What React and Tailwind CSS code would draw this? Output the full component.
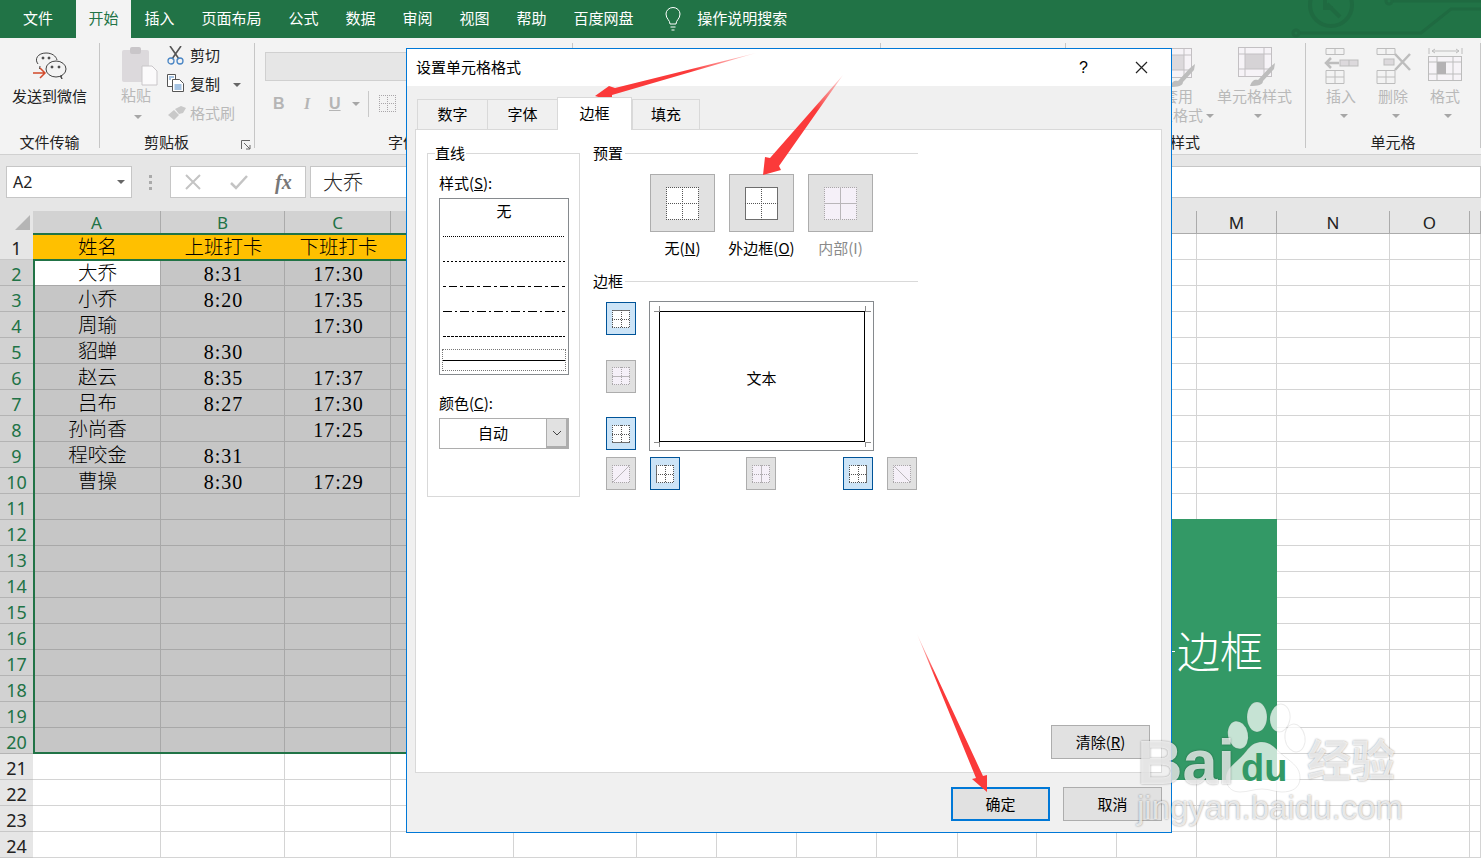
import React from "react";

const UI = "font-['Noto_Sans_CJK_SC',sans-serif]";
const Tab = ({ t, active }) => (
  <div className={`h-full flex items-center justify-center pb-[2px] text-[15px] whitespace-nowrap ${active ? "bg-[#f3f3f3] text-[#217346] w-[55px]" : "text-white px-[13.5px]"}`}>{t}</div>
);

const Caret = ({ c = "#a6a6a6", className = "" }) => (
  <svg width="8" height="4" viewBox="0 0 8 4" className={className}><path d="M0 0h8L4 4z" fill={c} /></svg>
);

function Group({ w, label, children, labelClass = "text-center" }) {
  return (
    <div style={{ width: w }} className="h-[105px] shrink-0 border-r border-[#c6c6c6] relative">
      <div className="h-[88px] relative">{children}</div>
      <div className={`h-[22px] text-[15px] leading-[22px] text-[#222] whitespace-nowrap ${labelClass}`}>{label}</div>
    </div>
  );
}

const WeChat = () => (
  <svg width="34" height="28" viewBox="0 0 34 28" fill="none" stroke="#444" strokeWidth="1">
    <path d="M5 12 C1 7 5 1 13 1 C19 1 23 4 24 8" />
    <path d="M7 14 L6.500 17" />
    <ellipse cx="23" cy="17" rx="10" ry="8" fill="#f3f3f3" />
    <path d="M27 24l2 3-1-4" />
    <circle cx="10" cy="6" r="1" fill="#444" /><circle cx="16" cy="6" r="1" fill="#444" />
    <circle cx="19" cy="15" r="1" fill="#444" /><circle cx="26" cy="15" r="1" fill="#444" />
    <path d="M0 21h11M7 16l5 5-5 5" stroke="#d2492a" strokeWidth="1.500" />
  </svg>
);
const Clip = () => (
  <svg width="36" height="40" viewBox="0 0 36 40">
    <rect x="0" y="3" width="27" height="32" rx="2" fill="#dcd9dc" />
    <rect x="8" y="0" width="11" height="7" rx="2" fill="#c9c6c9" />
    <path d="M20 19h10l5 5v14H20z" fill="#fbfafb" stroke="#c9c6c9" />
  </svg>
);
const Scissors = () => (
  <svg width="17" height="19" viewBox="0 0 17 19" fill="none">
    <path d="M3 0l9 13M14 0L5 13" stroke="#555" strokeWidth="1.600" />
    <circle cx="4" cy="15" r="3" stroke="#4a86c5" strokeWidth="1.300" /><circle cx="13" cy="15" r="3" stroke="#4a86c5" strokeWidth="1.300" />
  </svg>
);
const Copy = () => (
  <svg width="17" height="18" viewBox="0 0 17 18" fill="#fff" stroke="#555">
    <path d="M.5.500h8v12h-8z" /><path d="M5.500 5.500h7l4 4v8h-11z" />
    <path d="M7.500 11h7M7.500 13h7M7.500 15h7M2 3h5M2 5h2" stroke="#4a86c5" />
  </svg>
);
const Brush = () => (
  <svg width="18" height="14" viewBox="0 0 18 14"><path d="M0 9l6-5 5 5-5 5zM7 3l6-3 5 2-3 5-4 1z" fill="#c9c9c9" /></svg>
);

const TableStyleIcon = ({ w = 40, fillC = "#dcd9dc" }) => (
  <svg width={w} height="40" viewBox="0 0 40 40" fill="none">
    <rect x=".5" y=".5" width="33" height="29" fill="#f6f3f7" stroke="#c3c0c3" />
    <rect x="7" y="7" width="19" height="15" fill={fillC} />
    <path d="M7 .5v29M26 .5v29M.5 7h33M.5 22h33" stroke="#c3c0c3" />
    <path d="M12 39c2-6 5-7 8-6l12-13 5-4-1 6-11 12c0 4-5 5-13 5z" fill="#bdbdbd" />
  </svg>
);
const InsertIcon = () => (
  <svg width="36" height="36" viewBox="0 0 36 36" fill="none" stroke="#bdbdbd">
    <path d="M3 .5h18v6H3zM12 .5v6M3 22.500h18v13H3zM12 22.500v13M3 29h18" />
    <path d="M16 15H3M8 10l-5 5 5 5" strokeWidth="2.500" />
    <rect x="17" y="12" width="18" height="6" fill="#dcd9dc" /><path d="M26 12v6" />
  </svg>
);
const DeleteIcon = () => (
  <svg width="36" height="36" viewBox="0 0 36 36" fill="none" stroke="#bdbdbd">
    <path d="M1 .5h18v6H1zM10 .5v6M1 22.500h18v13H1zM10 22.500v13M1 29h18" />
    <rect x="8" y="11" width="10" height="6" fill="#dcd9dc" />
    <path d="M19 6l15 16M34 6L19 22" strokeWidth="2.500" />
  </svg>
);
const FormatIcon = () => (
  <svg width="36" height="38" viewBox="0 0 36 38" fill="none" stroke="#bdbdbd">
    <path d="M1 0v6M34 0v6M4 3h27M7 1L4 3l3 2M28 1l3 2-3 2" />
    <rect x=".5" y="8.500" width="33" height="24" fill="#f6f3f7" />
    <path d="M9 8.500v24M25 8.500v24M.5 14h33M.5 26h33" />
    <rect x="9" y="14" width="9" height="12" fill="#b4b2b4" stroke="none" />
  </svg>
);

const CELLS = {
  1: ["姓名", "上班打卡", "下班打卡"], 2: ["大乔", "8:31", "17:30"], 3: ["小乔", "8:20", "17:35"],
  4: ["周瑜", "", "17:30"], 5: ["貂蝉", "8:30", ""], 6: ["赵云", "8:35", "17:37"], 7: ["吕布", "8:27", "17:30"],
  8: ["孙尚香", "", "17:25"], 9: ["程咬金", "8:31", ""], 10: ["曹操", "8:30", "17:29"],
};
const COLS = ["A", "B", "C", "D", "E", "F", "G", "H", "I", "J", "K", "L", "M", "N", "O", ""];
const GRID = "grid grid-cols-[33px_128px_124px_106px_123px_123px_80px_80px_80px_81px_79px_80px_80px_80px_113px_80px_11px]";

function Sheet() {
  const rows = Array.from({ length: 24 }, (_, i) => i + 1);
  return (
    <div className="relative bg-[#e6e6e6] pt-[12px]">
      <div className={`${GRID} h-[22px]`}>
        <div className="relative bg-[#e6e6e6]">
          <svg width="15" height="15" viewBox="0 0 15 15" className="absolute left-[15px] top-[4px]"><path d="M15 0v15H0z" fill="#b5b5b5" /></svg>
        </div>
        {COLS.map((c, i) => (
          <div key={i} className={`border-r border-[#ababab] text-center text-[17px] leading-[23px] ${i < 4 ? "bg-[#d2d2d2] text-[#217346]" : "text-[#222]"} font-['Noto_Sans',sans-serif]`}>{c}</div>
        ))}
      </div>
      <div className="h-px bg-[#ababab]" />
      {rows.map((r) => {
        const sel = r >= 2 && r <= 20;
        return (
          <div key={r} className={`${GRID} h-[26px]`}>
            <div className={`h-[26px] border-b text-center text-[18px] leading-[27px] pt-[1px] font-['Noto_Sans',sans-serif] ${sel ? "bg-[#d2d2d2] border-[#b4b4b4] text-[#217346]" : "bg-[#e6e6e6] border-[#c8c8c8] text-[#222]"}`}>{r}</div>
            {COLS.map((c, i) => {
              const txt = CELLS[r]?.[i] || "";
              const dim = sel && i < 4;
              const active = r === 2 && i === 0;
              const head = r === 1 && i < 4;
              const digits = /^[0-9:]+$/.test(txt);
              const look = active ? "bg-white border-[#a8a8a8]" : head ? "bg-[#ffc000] border-[#ffc000]" : dim ? "bg-[#c6c6c6] border-[#a8a8a8]" : "bg-white border-[#d4d4d4]";
              return (
                <div key={i} className={`h-[26px] border-r border-b ${look} pl-[2px] pt-[1px] text-center leading-[26px] text-black font-light font-['Liberation_Serif','Noto_Sans_CJK_SC',serif] whitespace-nowrap ${digits ? "text-[20px] tracking-[1px]" : "text-[19.5px]"}`}>{txt}</div>
              );
            })}
          </div>
        );
      })}
      <div className="absolute left-[33px] top-[34px] w-[480px] h-[2px] bg-[#217346]" />
      <div className="absolute left-[33px] top-[60px] w-[480px] h-[495px] border-2 border-[#217346]" />
      <div className="absolute left-[1171px] top-[320px] w-[106px] h-[261px] bg-[#339966] flex items-center justify-center text-white text-[43px] leading-none pr-[8px] font-['Noto_Sans_CJK_SC',serif] font-light">
        <div className="absolute left-0 top-[132px] w-[4px] h-px bg-white" />
        边框
      </div>
    </div>
  );
}

function Pat({ s = 18, top = "d", bottom = "d", left = "d", right = "d", h = "d", v = "d", diag, fill = "#fff", soft }) {
  const dark = soft ? "#b9b6b9" : "#6e6e6e";
  const dot = soft ? "#a9a6a9" : "#555";
  const ln = (x1, y1, x2, y2, k) => k === "n" ? null : (
    <line x1={x1} y1={y1} x2={x2} y2={y2} stroke={k === "s" ? dark : dot} strokeWidth="1" strokeDasharray={k === "s" ? undefined : "1 1"} />
  );
  const m = Math.floor(s / 2) + 0.5;
  const e = s - 0.5;
  return (
    <svg width={s} height={s} viewBox={`0 0 ${s} ${s}`}>
      <rect x=".5" y=".5" width={s - 1} height={s - 1} fill={fill} />
      {ln(0, 0.5, s, 0.5, top)}{ln(0, e, s, e, bottom)}{ln(0.5, 0, 0.5, s, left)}{ln(e, 0, e, s, right)}
      {ln(0, m, s, m, h)}{ln(m, 0, m, s, v)}
      {diag === "up" && ln(0.5, e, e, 0.5, "s")}{diag === "down" && ln(0.5, 0.5, e, e, "s")}
    </svg>
  );
}

const BtnS = ({ on, cls = "", children }) => (
  <div className={`w-[30px] h-[33px] shrink-0 flex items-center justify-center border ${on ? "bg-[#cce4f7] border-[#005499]" : "bg-[#e1e1e1] border-[#adadad]"} ${cls}`}>{children}</div>
);

const Preset = ({ label, dis, children }) => (
  <div className="w-[65px] flex flex-col items-center">
    <div className="w-[65px] h-[58px] bg-[#e1e1e1] border border-[#adadad] flex items-center justify-center">{children}</div>
    <div className={`mt-[6px] whitespace-nowrap text-[15px] leading-[20px] ${dis ? "text-[#8a8a8a]" : "text-black"}`}>{label}</div>
  </div>
);

const LineRow = ({ dash, w = 1 }) => (
  <svg width="122" height="25" viewBox="0 0 122 25" className="block">
    <line x1="0" y1="12.500" x2="122" y2="12.500" stroke="#000" strokeWidth={w} strokeDasharray={dash} />
  </svg>
);

const Head = ({ t }) => (
  <div className="flex items-center h-[16px]">
    <span className="text-[15px] leading-[16px] text-black">{t}</span>
    <div className="ml-[2px] h-px bg-[#d9d9d9] flex-1" />
  </div>
);

function Dialog() {
  return (
    <div className="absolute left-[406px] top-[48px] w-[766px] h-[785px] border border-[#0078d7] bg-[#f0f0f0] flex flex-col text-black">
      <div className="h-[37px] bg-white flex items-center pl-[9px] pr-[20px] text-[15px] shrink-0">
        <span>设置单元格格式</span>
        <span className="ml-auto text-[16px] mr-[47px] font-['Liberation_Sans',sans-serif]">?</span>
        <svg width="13" height="13" viewBox="0 0 13 13" className="mr-[3px]"><path d="M1 1l11 11M12 1L1 12" stroke="#222" strokeWidth="1.200" /></svg>
      </div>
      <div className="flex h-[43px] pl-[10px] items-end shrink-0 relative z-10">
        {[["数字", 70], ["字体", 70], ["边框", 75, true], ["填充", 68]].map(([t, w, a], i) => (
          <div key={t} style={{ width: w }} className={`text-center text-[15px] border-t border-l border-[#d9d9d9] ${i >= 2 ? "border-r" : ""} ${a ? "h-[33px] bg-white leading-[30px] -mb-px" : "h-[30px] bg-[#f0f0f0] leading-[28px]"}`}>{t}</div>
        ))}
      </div>
      <div className="ml-[8px] mr-[9px] h-[644px] bg-white border border-[#d9d9d9] flex shrink-0 relative">
        <div className="relative ml-[11px] mt-[23px] w-[153px] h-[344px] border border-[#d9d9d9] shrink-0 pl-[11px] pt-[21px]">
          <div className="absolute left-[7px] -top-[9px] bg-white pr-[1px] text-[15px] leading-[16px]">直线</div>
          <div className="text-[15px] leading-[16px]">样式(<u>S</u>):</div>
          <div className="mt-[7px] w-[130px] h-[177px] border border-[#868a8e] flex flex-col items-center">
            <div className="h-[25px] text-[15px] leading-[23px]">无</div>
            <div className="w-[122px]">
              <LineRow dash="1 1" />
              <LineRow dash="2 2" />
              <LineRow dash="3 3 8 3" />
              <LineRow dash="9 3 2 3" />
              <LineRow dash="3 1" />
            </div>
            <div className="w-[124px] h-[22px] border border-dotted border-[#777] flex items-center">
              <div className="h-px w-full bg-black" />
            </div>
          </div>
          <div className="mt-[20px] text-[15px] leading-[16px]">颜色(<u>C</u>):</div>
          <div className="mt-[7px] w-[130px] h-[31px] border border-[#adadad] flex">
            <div className="flex-1 text-center text-[15px] leading-[27px]">自动</div>
            <div className="w-[22px] bg-[#e1e1e1] border-l border-[#adadad] border-r-2 border-b-2 flex items-center justify-center">
              <svg width="10" height="6" viewBox="0 0 10 6"><path d="M1 1l4 4 4-4" fill="none" stroke="#444" /></svg>
            </div>
          </div>
        </div>
        <div className="ml-[13px] mt-[15px] w-[325px] shrink-0 flex flex-col">
          <Head t="预置" />
          <div className="flex gap-[14px] ml-[57px] mt-[13px]">
            <Preset label={<>无(<u>N</u>)</>}><Pat s={33} /></Preset>
            <Preset label={<>外边框(<u>O</u>)</>}><Pat s={33} top="s" bottom="s" left="s" right="s" /></Preset>
            <Preset label="内部(I)" dis><Pat s={33} h="s" v="s" soft fill="#f5f0f8" /></Preset>
          </div>
          <div className="mt-[15px]"><Head t="边框" /></div>
          <div className="flex ml-[13px] mt-[12px]">
            <div className="w-[30px] h-[149px] flex flex-col justify-between shrink-0 pt-[1px]">
              <BtnS on><Pat top="s" /></BtnS>
              <BtnS><Pat h="s" soft fill="#f5f0f8" /></BtnS>
              <BtnS on><Pat bottom="s" /></BtnS>
            </div>
            <div className="ml-[13px] w-[225px] h-[150px] border border-[#868a8e] relative flex items-center justify-center text-[15px]">
              <div className="w-[206px] h-[131px] mt-[1px] pt-[3px] border border-black flex items-center justify-center">文本</div>
              <svg width="225" height="150" viewBox="0 0 225 150" className="absolute left-0 top-0" fill="none" stroke="#8a8a8a">
                <path d="M9.500 4v6M215.500 4v6M4 9.500h6M215 9.500h6M9.500 140v5M215.500 140v5M4 140.500h6M215 140.500h6" />
              </svg>
            </div>
          </div>
          <div className="flex ml-[13px] mt-[6px]">
            <BtnS><Pat diag="up" h="n" v="n" soft fill="#f5f0f8" /></BtnS>
            <BtnS on cls="ml-[14px]"><Pat left="s" /></BtnS>
            <BtnS cls="ml-[66px]"><Pat v="s" soft fill="#f5f0f8" /></BtnS>
            <BtnS on cls="ml-[67px]"><Pat right="s" /></BtnS>
            <BtnS cls="ml-[14px]"><Pat diag="down" h="n" v="n" soft fill="#f5f0f8" /></BtnS>
          </div>
        </div>
        <div className="absolute left-[635px] bottom-[13px] w-[99px] h-[34px] bg-[#e1e1e1] border border-[#adadad] text-center text-[15px] leading-[31px]">清除(<u>R</u>)</div>
      </div>
      <div className="flex justify-end gap-[13px] pr-[9px] pt-[14px]">
        <div className="w-[99px] h-[34px] bg-[#e1e1e1] border-2 border-[#0078d7] text-center text-[15px] leading-[30px]">确定</div>
        <div className="w-[99px] h-[34px] bg-[#e1e1e1] border border-[#adadad] text-center text-[15px] leading-[32px]">取消</div>
      </div>
    </div>
  );
}

const Gray = ({ cls = "", children }) => <div className={`absolute text-[15px] leading-[20px] text-[#b9b9b9] whitespace-nowrap ${cls}`}>{children}</div>;
const Dark = ({ cls = "", children }) => <div className={`absolute text-[15px] leading-[20px] text-[#222] whitespace-nowrap ${cls}`}>{children}</div>;

export default function App() {
  return (
    <div className={`relative w-[1481px] h-[859px] overflow-hidden bg-white ${UI}`}>
      <div className="relative h-[38px] bg-[#217346] flex items-center">
        <div className="w-[76px] h-full flex items-center justify-center pb-[2px] text-white text-[15px]">文件</div>
        <Tab t="开始" active />
        {["插入", "页面布局", "公式", "数据", "审阅", "视图", "帮助", "百度网盘"].map((t) => <Tab key={t} t={t} />)}
        <svg width="16" height="24" viewBox="0 0 16 24" fill="none" stroke="#fff" className="ml-[18px]">
          <path d="M5 17c0-4-4-5-4-10a7 6.500 0 0 1 14 0c0 5-4 6-4 10zM5.500 20h5M6.500 23h3" />
        </svg>
        <span className="ml-[16px] pb-[2px] text-white text-[15px]">操作说明搜索</span>
        <svg width="200" height="38" viewBox="0 0 200 38" fill="none" stroke="#1f6a41" strokeWidth="3" className="absolute right-0 top-0">
          <circle cx="50" cy="5" r="21" strokeWidth="4" />
          <path d="M44 0v8h8M46 4l13 13" strokeWidth="4" />
          <path d="M18 33h122l30-24h31" />
          <circle cx="15" cy="33" r="3" />
          <path d="M110 1h91" /><circle cx="108" cy="1" r="3" />
        </svg>
      </div>
      <div className="h-[117px] bg-[#f3f3f3] pt-[5px] flex border-b border-[#d0d0d0]">
        <Group w={100} label="文件传输">
          <div className="flex flex-col items-center pt-[9px] text-[15px] text-[#222] whitespace-nowrap">
            <WeChat />
            <div className="mt-[6px] leading-[20px]">发送到微信</div>
          </div>
        </Group>
        <Group w={155} label="剪贴板" labelClass="text-left pl-[44px]">
          <div className="absolute left-[22px] top-[4px]"><Clip /></div>
          <Gray cls="left-[21px] top-[42px]">粘贴</Gray>
          <Caret className="absolute left-[34px] top-[72px]" />
          <div className="absolute left-[67px] top-[3px]"><Scissors /></div>
          <Dark cls="left-[90px] top-[2px]">剪切</Dark>
          <div className="absolute left-[67px] top-[31px]"><Copy /></div>
          <Dark cls="left-[90px] top-[31px]">复制</Dark>
          <Caret c="#666" className="absolute left-[133px] top-[40px]" />
          <div className="absolute left-[68px] top-[63px]"><Brush /></div>
          <Gray cls="left-[90px] top-[60px]">格式刷</Gray>
          <svg width="10" height="10" viewBox="0 0 10 10" className="absolute left-[141px] top-[97px]" fill="none" stroke="#666"><path d="M.5 9V.5H9M3 3l6 6M5 9h4V5" /></svg>
        </Group>
        <Group w={318} label="字体" labelClass="text-left pl-[133px]">
          <div className="absolute left-[10px] top-[9px] w-[300px] h-[29px] bg-[#e6e6e6] border border-[#d0d0d0]" />
          <div className="absolute left-[18px] top-[51px] text-[16px] leading-[20px] font-bold text-[#b5b5b5] font-['Liberation_Sans',sans-serif]">B</div>
          <div className="absolute left-[49px] top-[51px] text-[16px] leading-[20px] font-bold italic text-[#b5b5b5] font-['Liberation_Serif',serif]">I</div>
          <div className="absolute left-[74px] top-[51px] text-[16px] leading-[20px] font-bold underline text-[#b5b5b5] font-['Liberation_Sans',sans-serif]">U</div>
          <Caret className="absolute left-[97px] top-[59px]" />
          <div className="absolute left-[113px] top-[48px] w-px h-[26px] bg-[#c9c9c9]" />
          <div className="absolute left-[124px] top-[52px]"><Pat s={17} soft fill="#f3f3f3" /></div>
        </Group>
        <Group w={308} label="" />
        <Group w={185} label="" />
        <Group w={240} label="样式" labelClass="text-left pl-[104px]">
          <div className="absolute left-[92px] top-[5px]"><TableStyleIcon /></div>
          <Gray cls="left-[97px] top-[43px]">套用</Gray>
          <Gray cls="left-[92px] top-[62px]">表格式</Gray>
          <Caret className="absolute left-[140px] top-[71px]" />
          <div className="absolute left-[172px] top-[4px]"><TableStyleIcon fillC="#d6d3d6" /></div>
          <Gray cls="left-[151px] top-[43px]">单元格样式</Gray>
          <Caret className="absolute left-[188px] top-[71px]" />
        </Group>
        <Group w={175} label="单元格">
          <div className="absolute left-[17px] top-[5px]"><InsertIcon /></div>
          <Gray cls="left-[20px] top-[43px]">插入</Gray>
          <Caret className="absolute left-[34px] top-[71px]" />
          <div className="absolute left-[70px] top-[5px]"><DeleteIcon /></div>
          <Gray cls="left-[72px] top-[43px]">删除</Gray>
          <Caret className="absolute left-[86px] top-[71px]" />
          <div className="absolute left-[122px] top-[5px]"><FormatIcon /></div>
          <Gray cls="left-[124px] top-[43px]">格式</Gray>
          <Caret className="absolute left-[138px] top-[71px]" />
        </Group>
      </div>
      <div className="h-[44px] bg-[#e6e6e6] pt-[11px] flex">
        <div className="ml-[6px] w-[126px] h-[32px] bg-white border border-[#c6c6c6] flex items-center justify-between px-[6px] text-[16px] font-['Noto_Sans',sans-serif] text-[#222]">
          A2<Caret c="#666" />
        </div>
        <div className="ml-[17px] w-[4px] flex flex-col gap-[3px] justify-center">
          <i className="block w-[3px] h-[3px] bg-[#aaa]" /><i className="block w-[3px] h-[3px] bg-[#aaa]" /><i className="block w-[3px] h-[3px] bg-[#aaa]" />
        </div>
        <div className="ml-[17px] w-[136px] h-[32px] bg-white border border-[#c6c6c6] flex items-center pl-[14px]">
          <svg width="16" height="16" viewBox="0 0 16 16"><path d="M1 1l14 14M15 1L1 15" stroke="#c4c4c4" strokeWidth="2" /></svg>
          <svg width="18" height="16" viewBox="0 0 18 16" className="ml-[29px]"><path d="M1 9l5 5L17 2" stroke="#c4c4c4" strokeWidth="2.500" fill="none" /></svg>
          <span className="ml-[27px] text-[20px] leading-none italic font-bold font-['Liberation_Serif',serif] text-[#777]">fx</span>
        </div>
        <div className="ml-[4px] flex-1 h-[32px] bg-white border border-[#c6c6c6] pl-[12px] text-[20px] leading-[29px] text-[#222] font-light">大乔</div>
      </div>
      <Sheet />
      <Dialog />

      <svg width="1481" height="859" viewBox="0 0 1481 859" className="absolute left-0 top-0 pointer-events-none">
        <defs>
          <linearGradient id="a1" x1="756" y1="53" x2="690" y2="70" gradientUnits="userSpaceOnUse"><stop offset="0" stopColor="#ff3b3b" stopOpacity=".15" /><stop offset="1" stopColor="#fb3a3a" /></linearGradient>
          <linearGradient id="a2" x1="843" y1="75" x2="815" y2="110" gradientUnits="userSpaceOnUse"><stop offset="0" stopColor="#ff3b3b" stopOpacity=".15" /><stop offset="1" stopColor="#fb3a3a" /></linearGradient>
          <linearGradient id="a3" x1="917" y1="634" x2="935" y2="675" gradientUnits="userSpaceOnUse"><stop offset="0" stopColor="#ff3b3b" stopOpacity=".15" /><stop offset="1" stopColor="#fb3a3a" /></linearGradient>
        </defs>
        <polygon fill="url(#a1)" points="756,53 615,88 609,86 595,96 612,101 612,95" />
        <polygon fill="url(#a2)" points="843,75 779,166 781,170 763,175 765,157 770,158" />
        <polygon fill="url(#a3)" points="917,634 983,776 987,775 987,792 972,779 976,778" />
        <g fill="#fff" fillOpacity=".72" stroke="#000" strokeOpacity=".08">
          <ellipse cx="1238" cy="735" rx="10" ry="14" transform="rotate(-12 1238 735)" />
          <ellipse cx="1257" cy="717" rx="10" ry="15" />
          <ellipse cx="1280" cy="718" rx="10" ry="14" transform="rotate(8 1280 718)" />
          <ellipse cx="1295" cy="738" rx="10" ry="14" transform="rotate(-10 1295 738)" />
          <path d="M1262 742c10 0 14 8 22 14 10 8 16 12 16 22 0 10-8 14-18 14-8 0-12-3-20-3s-14 3-22 3c-9 0-14-6-14-14 0-9 8-14 14-20 8-7 10-16 22-16z" />
        </g>
      </svg>
      <div className="absolute left-[1137px] top-[727px] text-[63px] leading-[70px] font-bold text-white/75 [text-shadow:0_0_2px_rgba(0,0,0,0.4)] font-['Liberation_Sans',sans-serif]">Bai</div>
      <div className="absolute left-[1241px] top-[743px] text-[38px] leading-[50px] font-bold text-[#339966] font-['Liberation_Sans',sans-serif]">du</div>
      <div className="absolute left-[1307px] top-[728px] text-[44px] leading-[60px] font-bold text-white/75 [text-shadow:0_0_2px_rgba(0,0,0,0.4)]">经验</div>
      <div className="absolute left-[1137px] top-[788px] text-[33px] leading-[40px] text-white/75 [text-shadow:0_0_2px_rgba(0,0,0,0.45)] font-['Liberation_Sans',sans-serif]">jingyan.baidu.com</div>
    </div>
  );
}
